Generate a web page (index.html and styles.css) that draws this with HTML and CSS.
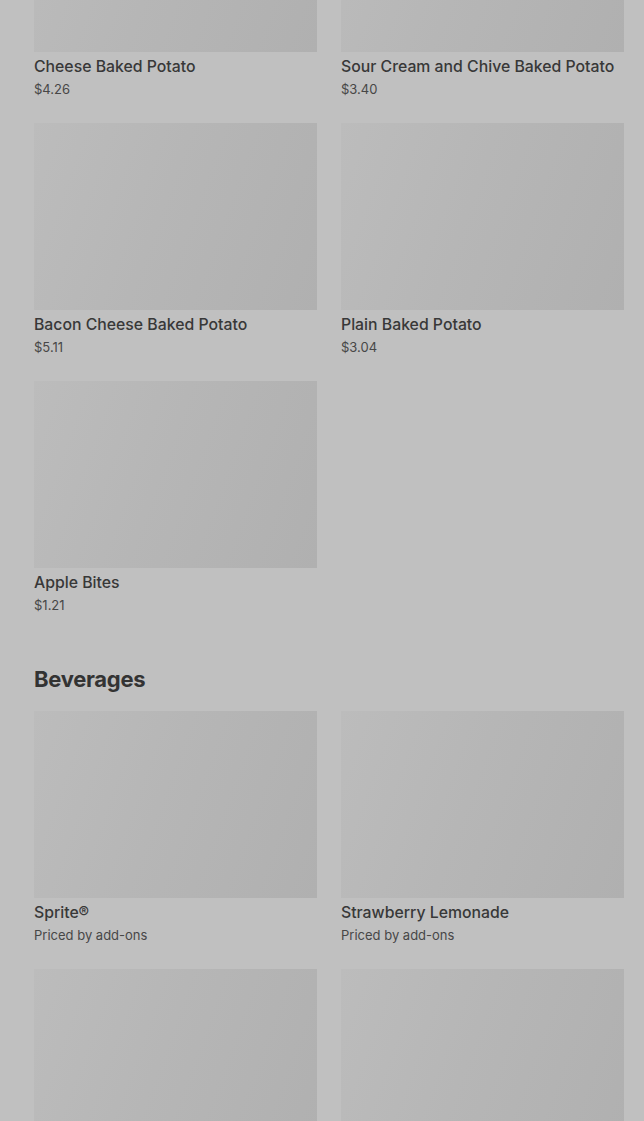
FILE: index.html
```html
<!DOCTYPE html>
<html lang="en">
<head>
    <meta charset="UTF-8">
    <meta name="viewport" content="width=device-width, initial-scale=1.0">
    <title>Menu</title>
    <link rel="stylesheet" href="styles.css">
</head>
<body>
    <div class="menu">
        <!-- Sides -->
        <section class="section">
            <div class="grid">
                <div class="item">
                    <div class="thumb"></div>
                    <div class="name">Cheese Baked Potato</div>
                    <div class="price">$4.26</div>
                </div>
                <div class="item">
                    <div class="thumb"></div>
                    <div class="name">Sour Cream and Chive Baked Potato</div>
                    <div class="price">$3.40</div>
                </div>
                <div class="item">
                    <div class="thumb"></div>
                    <div class="name">Bacon Cheese Baked Potato</div>
                    <div class="price">$5.11</div>
                </div>
                <div class="item">
                    <div class="thumb"></div>
                    <div class="name">Plain Baked Potato</div>
                    <div class="price">$3.04</div>
                </div>
                <div class="item">
                    <div class="thumb"></div>
                    <div class="name">Apple Bites</div>
                    <div class="price">$1.21</div>
                </div>
            </div>
        </section>

        <!-- Beverages -->
        <section class="section">
            <h2 class="section-title">Beverages</h2>
            <div class="grid">
                <div class="item">
                    <div class="thumb"></div>
                    <div class="name">Sprite®</div>
                    <div class="price">Priced by add-ons</div>
                </div>
                <div class="item">
                    <div class="thumb"></div>
                    <div class="name">Strawberry Lemonade</div>
                    <div class="price">Priced by add-ons</div>
                </div>
                <div class="item">
                    <div class="thumb"></div>
                </div>
                <div class="item">
                    <div class="thumb"></div>
                </div>
            </div>
        </section>
    </div>
</body>
</html>
```

FILE: styles.css
```css
body {
    margin: 0;
    background-color: #c0c0c0;
    color: #363636;
    font-family: Inter, "Noto Sans", Arial, sans-serif;
    overflow: hidden;
}
.menu {
    /* page is scrolled: first row of pictures starts above the window */
    margin-top: -135px;
    padding: 0 20px 0 34px;
}
.section + .section {
    margin-top: 48px;
}
.section-title {
    margin: 0 0 16px;
    font-size: 22px;
    line-height: 32px;
    font-weight: 700;
    letter-spacing: -0.3px;
    color: #333;
}
.grid {
    display: grid;
    grid-template-columns: 283px 283px;
    column-gap: 24px;
    row-gap: 24px;
}
.thumb {
    height: 187px;
    background: linear-gradient(110deg, #bcbcbc 0%, #b6b6b6 45%, #b0b0b0 100%);
}
.name {
    margin-top: 5px;
    font-size: 15.8px;
    line-height: 20px;
    font-weight: 500;
    color: #383838;
    white-space: nowrap;
}
.price {
    margin-top: 2px;
    font-size: 13px;
    line-height: 20px;
    color: #474747;
}
```
